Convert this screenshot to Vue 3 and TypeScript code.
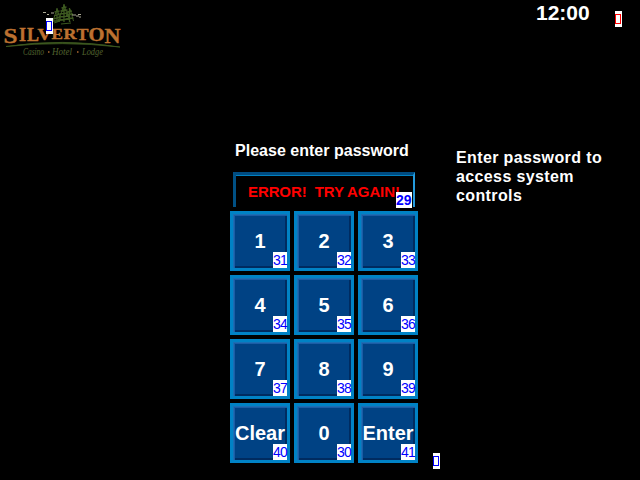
<script setup lang="ts">
interface PadKey {
  label: string
  tag: number
}

const keys: PadKey[] = [
  { label: '1', tag: 31 },
  { label: '2', tag: 32 },
  { label: '3', tag: 33 },
  { label: '4', tag: 34 },
  { label: '5', tag: 35 },
  { label: '6', tag: 36 },
  { label: '7', tag: 37 },
  { label: '8', tag: 38 },
  { label: '9', tag: 39 },
  { label: 'Clear', tag: 40 },
  { label: '0', tag: 30 },
  { label: 'Enter', tag: 41 },
]

interface Letter {
  char: string
  x: number
  y: number
  size: number
  width: number
}

// Brand letters grow towards both ends so the baseline follows the arc.
const letters: Letter[] = [
  { char: 'S', x: 3.5, y: 42.5, size: 21.5, width: 14 },
  { char: 'I', x: 19, y: 41.3, size: 19.5, width: 7 },
  { char: 'L', x: 27, y: 40.5, size: 18, width: 12 },
  { char: 'V', x: 37.5, y: 39.5, size: 16.5, width: 14 },
  { char: 'E', x: 51.5, y: 39, size: 15.5, width: 11.5 },
  { char: 'R', x: 63.5, y: 39, size: 15.5, width: 13 },
  { char: 'T', x: 76.5, y: 39.7, size: 16.5, width: 12 },
  { char: 'O', x: 88.5, y: 41, size: 18.5, width: 16 },
  { char: 'N', x: 104.5, y: 43.2, size: 22, width: 16 },
]
</script>

<template>
  <main class="screen">
    <header class="left">
      <div class="brand">
        <svg class="logo" width="126" height="62" viewBox="0 0 126 62">
          <g fill="none" stroke="#3d5920" stroke-width="1.3">
            <path d="M57 8v13M54.500 12l5-1M54 16l6-2M53 19l8-2M53 21h7M64 4v18M61.500 8l5-1M60.500 11l7-1M59.500 14l9-1M58.500 17l11-1M58 20l12-1M69.500 8v14M67 12l5-1M66 15l7-1M65.500 19l8-1" />
            <path d="M57 9l-4 12M57 9l4 12M64 5l-6 17M64 5l6 17M70 9l3.500 12M54 23l6-2M61 24l10-1" stroke-width="1" />
          </g>
          <path d="M43 12.500h3M47 14.500h2M51 13h3M72 15h4M76 16h3M78 14.500h3M79 17h2" stroke="#aaa994" stroke-width="1" fill="none" />
          <g class="wordmark">
            <text
              v-for="l in letters"
              :key="l.char"
              :x="l.x"
              :y="l.y"
              :font-size="l.size"
              :textLength="l.width"
              lengthAdjust="spacingAndGlyphs"
            >{{ l.char }}</text>
          </g>
          <path d="M6 46.500Q62 38 120 47Q62 40.500 6 46.500Z" fill="#3d5920" stroke="#3d5920" stroke-width=".8" />
          <g class="tagline">
            <text x="23" y="54.500" textLength="21" lengthAdjust="spacingAndGlyphs">Casino</text>
            <text x="52" y="54.500" textLength="20" lengthAdjust="spacingAndGlyphs">Hotel</text>
            <text x="82" y="54.500" textLength="21" lengthAdjust="spacingAndGlyphs">Lodge</text>
          </g>
          <path d="M48 52h1.500M77 52h1.500" stroke="#b06a30" stroke-width="1.500" />
        </svg>
        <span class="chip brand-chip"><i class="box" /></span>
      </div>
    </header>

    <section class="center">
      <h1 class="prompt">Please enter password</h1>
      <div class="display">
        <span class="error">ERROR!&nbsp; TRY AGAIN!</span>
        <span class="tag">29</span>
      </div>
      <div class="pad">
        <button v-for="k in keys" :key="k.tag" class="key" type="button">
          <span class="label">{{ k.label }}</span>
          <span class="tag">{{ k.tag }}</span>
        </button>
      </div>
    </section>

    <aside class="right">
      <div class="status">
        <time class="clock">12:00</time>
        <span class="chip red"><i class="box" /></span>
      </div>
      <p class="help">Enter password to<br />access system<br />controls</p>
      <span class="chip corner"><i class="box" /></span>
    </aside>
  </main>
</template>

<style>
body {
  background: #000;
  overflow: hidden;
}
</style>

<style scoped>
.screen {
  display: grid;
  grid-template-columns: 230px 188px 222px;
  width: 640px;
  height: 480px;
  overflow: hidden;
  background: #000;
  color: #fff;
  font-family: "Liberation Sans", Arial, sans-serif;
  font-weight: bold;
}
.brand {
  position: relative;
  width: 126px;
  height: 62px;
}
.logo {
  display: block;
}
.wordmark {
  fill: #bd7130;
  stroke: #bd7130;
  stroke-width: 0.4px;
  font-family: "Liberation Serif", serif;
  font-weight: bold;
}
.tagline {
  fill: #52632f;
  font: italic 10px "Liberation Serif", serif;
}
.chip {
  display: flex;
  align-items: center;
  justify-content: flex-start;
  box-sizing: border-box;
  width: 7px;
  height: 16px;
  background: #fff;
  color: #00f;
}
.box {
  width: 6px;
  height: 10px;
  box-sizing: border-box;
  border: 1px solid currentColor;
}
.brand-chip {
  position: absolute;
  left: 46px;
  top: 18px;
}
.center {
  padding-top: 141px;
}
.prompt {
  margin: 0 0 0 5px;
  font-size: 16px;
  line-height: 19px;
  height: 31px;
  letter-spacing: 0.02px;
  white-space: nowrap;
}
.display {
  position: relative;
  box-sizing: border-box;
  width: 182px;
  height: 35px;
  margin: 0 0 4px 3px;
  padding: 8px 0 0 12px;
  border: solid;
  border-width: 3px 2px 0 3px;
  border-color: #004b80 #249bdd #000 #005084;
  box-shadow: inset 0 1px 0 #0081c2;
}
.error {
  display: block;
  color: #f00;
  font-size: 15px;
  line-height: 17px;
  letter-spacing: -0.1px;
  white-space: nowrap;
}
.tag {
  position: absolute;
  right: 3px;
  bottom: 3px;
  width: 14px;
  height: 16px;
  background: #fff;
  color: #00f;
  font-size: 14px;
  font-weight: normal;
  line-height: 17px;
  letter-spacing: -0.8px;
  text-align: left;
  white-space: nowrap;
}
.display .tag {
  right: 1px;
  bottom: -1px;
  width: 16px;
  font-weight: bold;
  letter-spacing: 0;
}
.pad {
  display: grid;
  grid-template-columns: repeat(3, 60px);
  grid-auto-rows: 60px;
  gap: 4px;
}
.key {
  position: relative;
  display: flex;
  align-items: center;
  justify-content: center;
  padding: 0;
  border: 3px solid #0082c5;
  background: #004284;
  box-shadow: inset 1px 1px 0 #1a6fb5, inset 2px 2px 0 #1c5ca5, inset -2px -2px 0 #002b60;
  color: #fff;
  font: bold 20px "Liberation Sans", Arial, sans-serif;
}
.key .tag {
  right: 0;
  bottom: 0;
}
.label {
  line-height: 22px;
}
.right {
  display: flex;
  flex-direction: column;
}
.status {
  display: flex;
  height: 148px;
  padding-left: 118px;
}
.clock {
  width: 79px;
  padding-top: 1px;
  font-size: 21px;
  line-height: 24px;
}
.red {
  margin-top: 11px;
  color: #f00;
}
.help {
  margin: 0 0 0 38px;
  height: 305px;
  font-size: 16px;
  line-height: 19px;
  letter-spacing: 0.38px;
}
.corner {
  margin-left: 15px;
}
</style>
